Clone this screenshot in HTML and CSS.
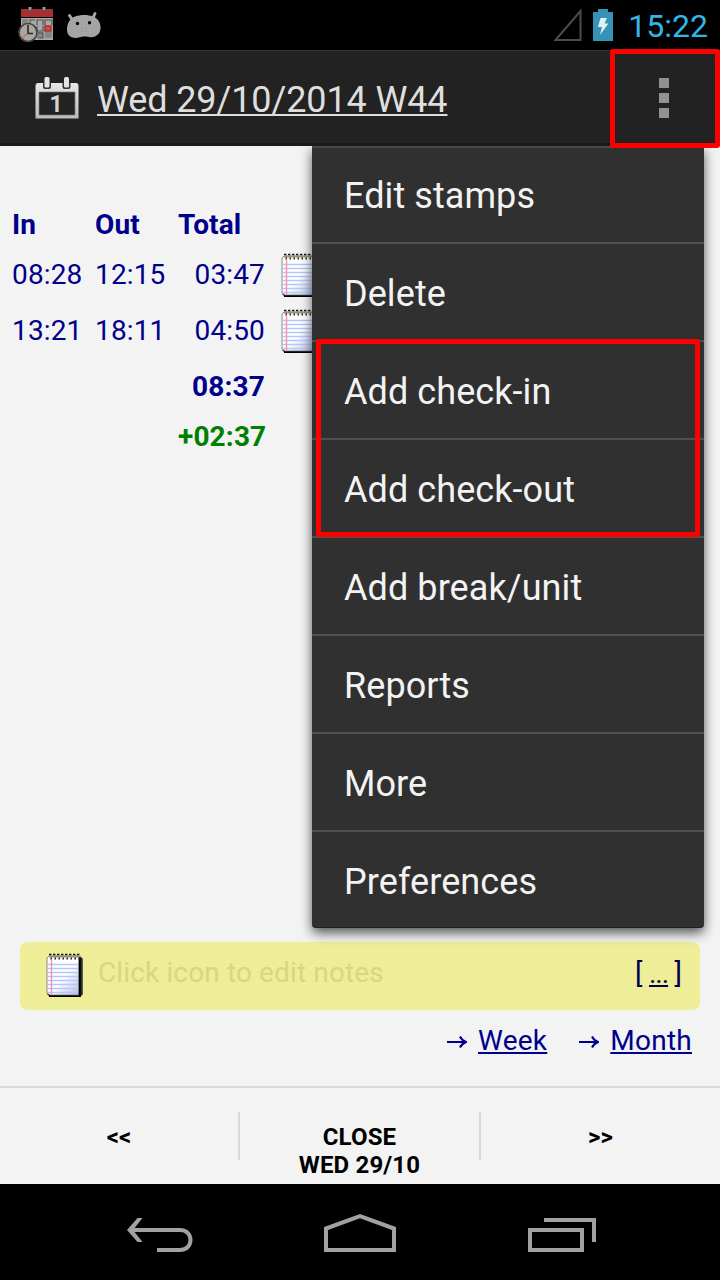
FILE: index.html
```
<!DOCTYPE html>
<html lang="en">
<head>
<meta charset="utf-8">
<title>Time stamps</title>
<link rel="stylesheet" href="styles.css">
</head>
<body>
<svg class="defs" width="0" height="0">
  <defs>
    <linearGradient id="paper" x1="0" y1="0" x2="1" y2="1">
      <stop offset=".55" stop-color="#fff"/><stop offset="1" stop-color="#b4bce0"/>
    </linearGradient>
    <symbol id="notepad" viewBox="0 0 38 46">
      <path d="M3 3H34L37 6V41L34 44H4L1 41V6Z" fill="#111"/>
      <path d="M1 5L3 3H33V42H4L1 40Z" fill="url(#paper)" stroke="#888" stroke-width="1"/>
      <path d="M33.5 4V42M3 43.3H35" stroke="#000" stroke-width="1.5"/>
      <path d="M36.2 5V41" stroke="#777" stroke-width="1"/>
      <path d="M2 11.5H32M2 15.5H32M2 19.5H32M2 23.5H32M2 27.5H32M2 31.5H32M2 35.5H32M2 39.5H32" stroke="#b5c8fb" stroke-width="1.5"/>
      <path d="M5.500 7V42" stroke="#ff8db0" stroke-width="1.400"/>
      <path d="M3 1.5H35" stroke="#111" stroke-width="1.6" stroke-dasharray="2.4 1.6"/>
      <path d="M3 3.6H35" stroke="#97986f" stroke-width="1.8"/>
      <path d="M4.5 5.5H35" stroke="#222" stroke-width="2.2" stroke-dasharray="1.5 2.5"/>
    </symbol>
  </defs>
</svg>

<header class="status">
  <svg class="status-calendar" width="36" height="36" viewBox="0 0 36 36">
    <path d="M3 11H35V33H3Z" fill="#a8a8a8"/>
    <path d="M3 2H35V10H3Z" fill="#a82f2f"/>
    <path d="M12 0v4M26 0v4" stroke="#555" stroke-width="4"/><path d="M12 0v3M26 0v3" stroke="#aaa" stroke-width="1.6"/>
    <path d="M4 12h6v5H4zM20 25h5v6h-7M27 25h7v6h-7z" fill="#868686"/>
    <path d="M12 18v-5h5M19 18v-5h6v5M27 18v-5h7v5M19 19v5h6v-5M20 26h5v5h-5" fill="none" stroke="#555" stroke-width="1.2"/>
    <path d="M27 19h6v5h-6z" fill="#bd5555" stroke="#b22b2b" stroke-width="1.4"/>
    <circle cx="10" cy="25.500" r="9" fill="#aaa79f" stroke="#45423d" stroke-width="1.700"/>
    <path d="M10 18V26.500H15" fill="none" stroke="#282828" stroke-width="1.600"/><path d="M10 26L4.500 31" stroke="#b54444" stroke-width=".9"/>
  </svg>
  <svg class="status-android" width="36" height="28" viewBox="0 0 36 28">
    <path d="M3.500 4.500L6.500 9M29 2.500L26.500 8" stroke="#a5a5a5" stroke-width="3" stroke-linecap="round"/>
    <path d="M1 19C1 12 4 7 9 5.500C15 3.500 22 3.500 27 5.500C33 8 35 13 34.500 18C34 24 28 27 23 26C19 25.300 17 25.300 13 26.500C6 28 1 25 1 19Z" fill="#a5a5a5"/>
    <circle cx="11.500" cy="12.500" r="1.700" fill="#000"/><circle cx="23.500" cy="11.700" r="1.700" fill="#000"/>
    <path d="M15 17.500h1M19.500 17h1M15 20.500h1M19 20.500h1" stroke="#888" stroke-width="1"/>
  </svg>
  <svg class="signal" width="30" height="34" viewBox="0 0 30 34"><path d="M2.500 32H27.500V3Z" fill="none" stroke="#4c4c4c" stroke-width="2"/></svg>
  <svg class="battery" width="20" height="32" viewBox="0 0 20 32">
    <path d="M0 3H5V0H15V3H20V32H0Z" fill="#3792b7"/>
    <path d="M7.500 9H14L11.500 14.500H15.500L7 26L9 18H5Z" fill="#e2eff5"/>
  </svg>
  <span class="clock">15:22</span>
</header>

<div class="action-bar">
  <svg class="today" width="44" height="44" viewBox="0 0 44 44">
    <defs><linearGradient id="metal" x2="0" y2="1"><stop stop-color="#e6e6e6"/><stop offset="1" stop-color="#bcbcbc"/></linearGradient></defs>
    <path d="M3 7H41Q43.500 7 43.500 10V42.500H.5V10Q.5 7 3 7Z" fill="url(#metal)"/>
    <path d="M4 16H40V39H4Z" fill="#222" stroke="#777" stroke-width=".7"/>
    <path d="M8 6h8v5q0 2-2 2h-4q-2 0-2-2zM27.500 6h8v5q0 2-2 2h-4q-2 0-2-2z" fill="#333"/>
    <rect x="9.500" y="1" width="5" height="10.500" rx="1.500" fill="#e3e3e3"/><rect x="29" y="1" width="5" height="10.500" rx="1.500" fill="#e3e3e3"/>
    <text class="day" x="14.500" y="36">1</text>
  </svg>
  <a class="date">Wed 29/10/2014 W44</a>
  <div class="overflow"><i></i><i></i><i></i></div>
</div>

<main class="content">
  <div class="stamps">
    <b>In</b><b>Out</b><b class="total-head">Total</b><span></span>
    <span>08:28</span><span>12:15</span><span class="sum">03:47</span><svg width="38" height="46"><use href="#notepad"/></svg>
    <span>13:21</span><span>18:11</span><span class="sum">04:50</span><svg width="38" height="46"><use href="#notepad"/></svg>
    <span></span><span></span><b class="sum">08:37</b><span></span>
    <span></span><span></span><b class="sum balance">+02:37</b><span></span>
  </div>
  <div class="notes">
    <svg width="38" height="46"><use href="#notepad"/></svg>
    <span class="hint">Click icon to edit notes</span>
    <span class="more">[ <u>...</u> ]</span>
  </div>
  <div class="links">
    <svg class="arrow" width="20" height="14"><path d="M0 8H18M13 2.500Q14.500 6 19 8Q14.500 10 13 13.500" fill="none" stroke="#00008b" stroke-width="2"/></svg><a class="week">Week</a>
    <svg class="arrow" width="20" height="14"><path d="M0 8H18M13 2.500Q14.500 6 19 8Q14.500 10 13 13.500" fill="none" stroke="#00008b" stroke-width="2"/></svg><a>Month</a>
  </div>
  <nav class="menu">
    <div>Edit stamps</div><div>Delete</div><div>Add check-in</div><div>Add check-out</div>
    <div>Add break/unit</div><div>Reports</div><div>More</div><div>Preferences</div>
    <span class="mark mark-items"></span>
  </nav>
</main>

<footer class="buttons">
  <div>&lt;&lt;</div><div class="close">CLOSE<br>WED 29/10</div><div>&gt;&gt;</div>
</footer>

<div class="navbar">
  <svg width="68" height="36" viewBox="0 0 68 36"><path d="M11.500 1H16.500L7 13L16.500 25H11.500L1 13Z" fill="#a1a1a1"/><path d="M4 13H54C68 13 68 33 54 33H31" fill="none" stroke="#a1a1a1" stroke-width="4"/></svg>
  <svg width="72" height="38" viewBox="0 0 72 38"><path d="M2 36V14.500L36 2.200L70 14.500V36Z" fill="none" stroke="#a1a1a1" stroke-width="4"/></svg>
  <svg width="68" height="34" viewBox="0 0 68 34"><path d="M2 12H54V32H2ZM16 2H66V24" fill="none" stroke="#a1a1a1" stroke-width="4"/></svg>
</div>
</body>
</html>
```
FILE: styles.css
```
* { box-sizing: border-box; }
body {
  margin: 0;
  width: 720px;
  height: 1280px;
  display: flex;
  flex-direction: column;
  overflow: hidden;
  background: #f3f3f3;
  color: #00008b;
  font: 28px/1 Roboto, sans-serif;
}
svg { display: block; flex: none; }
.defs { position: absolute; }

.status { height: 50px; background: #000; display: flex; align-items: flex-start; padding: 0 12px 0 18px; }
.status-calendar { margin-top: 7px; }
.status-android { margin: 11px 0 0 12px; }
.signal { margin: 8px 0 0 auto; }
.battery { margin: 9px 0 0 10px; }
.clock { margin: 9px 0 0 15px; color: #33b5e5; font-size: 32px; line-height: 34px; }

.action-bar {
  position: relative;
  z-index: 2;
  height: 96px;
  display: flex;
  align-items: center;
  padding-left: 35px;
  background: #222;
  border-top: 1px solid #343434;
  border-bottom: 3px solid #1a1a1a;
}
.today { margin-top: 2px; }
.day { font: bold 23px Roboto, sans-serif; fill: #d2d2d2; }
.date { margin-left: 18px; padding-top: 6px; font-size: 36px; line-height: 42px; letter-spacing: -.12px; color: #dedede; text-decoration: underline; text-decoration-thickness: 2px; text-underline-offset: 2px; }
.overflow {
  position: absolute;
  top: -2px;
  right: 0;
  width: 110px;
  height: 99px;
  border: 5px solid red;
  border-radius: 3px;
  display: flex;
  flex-direction: column;
  align-items: center;
  gap: 5px;
  padding-top: 24px;
}
.overflow i { width: 10px; height: 10px; background: #919191; margin-right: 2px; }

.content { position: relative; height: 940px; display: flex; flex-direction: column; }
.stamps {
  display: grid;
  grid-template-columns: 83px 83px 87px 53px;
  grid-template-rows: 44px 56px 56px 56px 44px;
  align-items: center;
  padding: 56px 0 0 12px;
}
.stamps span, .stamps b { padding-top: 2px; letter-spacing: .15px; }
.sum { text-align: right; }
.stamps svg { margin-left: 16px; margin-top: 3px; }
.balance { color: #008000; }
.notes {
  height: 68px;
  margin: 484px 20px 0;
  border-radius: 8px;
  background: #eeed98;
  display: flex;
  align-items: center;
  padding: 0 18px 0 26px;
}
.hint { margin: -6px 0 0 14px; color: #d8d780; letter-spacing: .13px; }
.more { margin: -4px 0 0 auto; color: #00004c; word-spacing: -.5px; }
.more u { letter-spacing: -1px; text-underline-offset: 2px; text-decoration-thickness: 2px; }
.links { display: flex; align-items: center; justify-content: flex-end; padding: 14px 28px 0; line-height: 34px; }
.links a { margin-left: 11px; letter-spacing: .25px; text-decoration: underline; text-underline-offset: 2px; text-decoration-thickness: 2px; }
.links .week { margin-right: 32px; }

.menu {
  position: absolute;
  z-index: 1;
  top: 0;
  left: 312px;
  width: 392px;
  height: 782px;
  background: #303030;
  border-top: 2px solid #494949;
  border-bottom: 1px solid #202020;
  border-radius: 0 0 4px 4px;
  box-shadow: 0 5px 12px rgba(0, 0, 0, .65);
  color: #f3f3f3;
  font-size: 36px;
  letter-spacing: .08px;
}
.menu div { height: 98px; padding: 2px 32px 0; line-height: 96px; border-bottom: 2px solid #505050; }
.menu div:first-child { height: 96px; padding-top: 1px; line-height: 94px; }
.menu div:nth-child(8) { border: 0; height: 95px; }
.mark { position: absolute; border: 5px solid red; border-radius: 3px; }
.mark-items { left: 4px; top: 191px; width: 384px; height: 198px; }

.buttons {
  height: 98px;
  border-top: 2px solid #d9d9d9;
  display: grid;
  grid-template-columns: 240px 241px 239px;
  color: #000;
  font: bold 24px/28px Roboto, sans-serif;
  text-align: center;
  padding-top: 24px;
}
.buttons div { height: 48px; padding-top: 11px; }
.buttons .close { letter-spacing: .15px; }
.buttons div:not(:last-child) { border-right: 2px solid #d9d9d9; }

.navbar { height: 96px; background: #000; display: grid; grid-template-columns: 68px 72px 68px; column-gap: 129px; padding: 0 0 0 126px; align-items: start; }
.navbar svg { margin-top: 34px; }
.navbar svg:nth-child(1) { margin-top: 33px; }
.navbar svg:nth-child(2) { margin: 30px 0 0 1px; }
.navbar svg:nth-child(3) { margin: 34px 0 0 4px; }
```
